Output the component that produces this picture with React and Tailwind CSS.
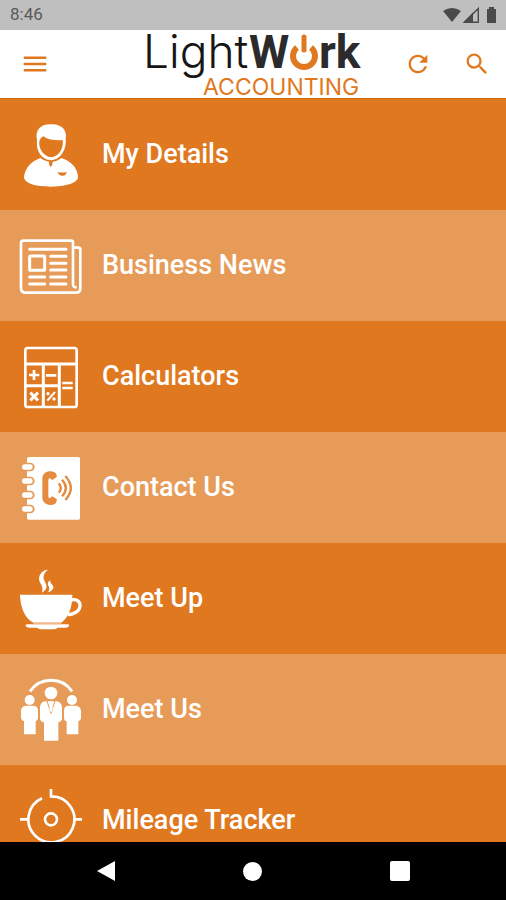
import React from 'react';
import { MdMenu, MdRefresh, MdSearch } from 'react-icons/md';

const ICON = 'size-16 shrink-0';

function PersonIcon() {
  return (
    <svg viewBox="57 50 192 192" className={ICON} aria-hidden="true">
      <path
        d="M111 101C105 72 120 54 151 54C184 51 203 71 197 98C200 126 184 160 153 162C123 160 107 132 111 101Z"
        fill="#fff"
      />
      <path
        d="M118 105C120 97 126 91 132 90C140 99 156 103 188 101C192 124 177 152 153 153C132 151 115 128 118 105Z"
        fill="#e07820"
      />
      <path
        d="M121 155C132 163 142 166 151 167L147 173L151 181L153 181L158 173L154 167C166 166 176 162 184 155C213 164 233 184 234 213C232 232 192 241 153 241C112 241 74 233 72 213C75 184 94 165 121 155Z"
        fill="#fff"
      />
      <path d="M146 166L149 173L151 181L154 173L160 166Z" fill="#e07820" />
      <path d="M173 197Q187 200 200 197Q199 208 187 208Q176 208 173 197Z" fill="#e07820" />
    </svg>
  );
}

function NewsIcon() {
  return (
    <svg
      viewBox="57 52 192 192"
      className={ICON}
      fill="none"
      stroke="#fff"
      strokeWidth="8"
      strokeLinecap="round"
      aria-hidden="true"
    >
      <path
        d="M219 204V78Q219 72 213 72H70Q63 72 63 79V214Q63 228 77 228H228Q241 228 241 214V99Q241 93 235 93H221M219 204Q220 212 227 212"
        strokeLinejoin="round"
      />
      <path
        d="M89 98H198M152 119H198M152 140H198M152 160H198M152 181H198M152 202H198M89 181H134M89 202H134"
        strokeWidth="9"
      />
      <rect x="89" y="118" width="45" height="43" rx="2" strokeWidth="9" />
    </svg>
  );
}

function CalculatorIcon() {
  return (
    <svg viewBox="57 55 192 192" className={ICON} fill="none" stroke="#fff" strokeWidth="8" aria-hidden="true">
      <rect x="76" y="64" width="154" height="177" rx="7" />
      <path d="M75 112H230M130 112V242M178 112V242M75 177H178" strokeWidth="9" />
      <path d="M87 145H118M102 130V160M138 146H169M187 169H218M187 184H218" />
      <path d="M91 198L114 221M114 198L91 221" strokeWidth="9" />
      <path d="M142 222L165 196" strokeWidth="6" />
      <circle cx="144" cy="201" r="5" fill="#fff" stroke="none" />
      <circle cx="162" cy="217" r="5" fill="#fff" stroke="none" />
    </svg>
  );
}

function PhoneBookIcon() {
  return (
    <svg viewBox="57 52 192 192" className={ICON} fill="none" aria-hidden="true">
      <rect x="81" y="55" width="159" height="188" rx="5" fill="#fff" />
      {[85, 127, 169, 211].map((y) => (
        <g key={y}>
          <rect x="62" y={y - 13} width="42" height="26" rx="13" fill="#e79b59" />
          <rect x="66" y={y - 8} width="32" height="16" rx="8" fill="#fff" />
        </g>
      ))}
      <path
        d="M149 98C134 99 127 109 127 121V176C127 189 136 198 151 199C162 199 170 193 170 186V181L156 173L149 179Q145 179 145 172V125Q145 118 150 119L157 124L170 115V110C169 102 160 98 149 98Z"
        fill="#e58a3f"
      />
      <path
        d="M176 134Q189 148 176 162M186 123Q209 148 186 173M196 112Q229 148 196 184"
        stroke="#e58a3f"
        strokeWidth="7"
      />
    </svg>
  );
}

function CoffeeIcon() {
  return (
    <svg viewBox="57 55 192 192" className={ICON} fill="#fff" aria-hidden="true">
      <path d="M144 63C129 64 117 75 117 91C118 106 132 110 126 132C135 127 141 119 139 110C137 100 129 94 131 82C132 74 138 68 144 63Z" />
      <path d="M151 95C143 99 142 107 146 113C149 119 148 125 144 131C154 128 161 121 160 114C158 107 149 104 151 95Z" />
      <path d="M60 138H217C217 177 205 207 184 222H100C76 210 61 179 60 138Z" />
      <path d="M211 155C229 149 241 158 240 172C239 187 222 198 204 198" fill="none" stroke="#fff" strokeWidth="10" />
      <path d="M81 227H204Q209 227 207 232Q205 237 197 237H172Q170 242 161 242H125Q115 242 112 237H87Q78 236 77 231Q77 227 81 227Z" />
      <path d="M100 224H184" stroke="#f0b98c" strokeWidth="5" />
    </svg>
  );
}

function MeetingIcon() {
  return (
    <svg viewBox="57 55 192 192" className={ICON} fill="#fff" aria-hidden="true">
      <path d="M90 95C121 50 187 51 216 95" fill="none" stroke="#fff" strokeWidth="9" />
      <circle cx="89" cy="121" r="15" />
      <circle cx="216" cy="121" r="15" />
      <circle cx="153" cy="100" r="19" />
      <path d="M77 138H101Q114 140 114 153V176Q113 184 107 185V224H72V185Q64 183 63 174V153Q64 140 77 138Z" />
      <path d="M204 138H228Q241 140 243 153V176Q242 184 235 185V224H200V185Q192 183 192 174V153Q192 140 204 138Z" />
      <path d="M137 125H169Q184 127 186 142V177Q184 187 175 188V243H132V188Q122 187 120 177V142Q121 127 137 125Z" />
      <path d="M141 124L153 161L165 124" fill="none" stroke="#e79b59" strokeWidth="3" />
      <path d="M149 125H157L156 132L158 151L153 158L148 151L151 132Z" fill="#fff" />
    </svg>
  );
}

function TrackerIcon() {
  return (
    <svg viewBox="57 55 192 192" className={ICON} fill="none" stroke="#fff" strokeWidth="8" aria-hidden="true">
      <path d="M126 83A69 69 0 1 0 153 77V54" />
      <circle cx="153" cy="146" r="18" />
      <path d="M60 146H84M222 146H246M153 215V239" />
    </svg>
  );
}

function Logo() {
  return (
    <svg
      viewBox="0 0 222 68"
      className="h-[68px] w-[222px] shrink-0 overflow-visible"
      role="img"
      aria-label="LightWork Accounting"
    >
      <text x="1" y="38" fontSize="46" fontWeight="300" fontFamily="Inter, sans-serif" fill="#161616">
        Light
      </text>
      <g fontSize="46" fontWeight="700" fontFamily="Roboto, sans-serif" fill="#2b2b2d">
        <text x="107" y="38">
          W
        </text>
        <text x="177" y="38">
          rk
        </text>
      </g>
      <text x="61" y="65" fontSize="23" fontWeight="400" fontFamily="Inter, sans-serif" fill="#e07820">
        ACCOUNTING
      </text>
      <g fill="none" stroke="#e07820">
        <path d="M155 17.500A11 11 0 1 0 169 17.500" strokeWidth="6" />
        <path d="M162 7V20" strokeWidth="5" strokeLinecap="round" />
      </g>
    </svg>
  );
}

const menuItems = [
  { label: 'My Details', Icon: PersonIcon },
  { label: 'Business News', Icon: NewsIcon },
  { label: 'Calculators', Icon: CalculatorIcon },
  { label: 'Contact Us', Icon: PhoneBookIcon },
  { label: 'Meet Up', Icon: CoffeeIcon },
  { label: 'Meet Us', Icon: MeetingIcon },
  { label: 'Mileage Tracker', Icon: TrackerIcon },
];

function StatusBar() {
  return (
    <div className="flex h-[30px] shrink-0 items-center justify-between bg-[#bfbfbf] pr-[9px] pl-2.5 text-[#5a5a5a]">
      <span className="text-[17px]">8:46</span>
      <svg viewBox="0 0 57 18" className="h-[18px] w-[57px]" fill="#4a4a4a" aria-hidden="true">
        <path d="M3 5Q12 -1 21 5L12 16Z" />
        <path d="M33 6.500V16.500H23Z" />
        <path d="M38.300 2.500V16.300H24.500Z" fill="none" stroke="#4a4a4a" strokeWidth="1.400" />
        <path d="M49 1H54V3H56V17H47V3H49Z" />
      </svg>
    </div>
  );
}

function Header() {
  return (
    <header className="flex h-[68px] shrink-0 items-center justify-between bg-white pr-[15px] pl-5 text-[#e07820]">
      <button type="button" aria-label="Menu">
        <MdMenu className="size-[30px]" />
      </button>
      <div className="flex items-center gap-10">
        <Logo />
        <div className="flex items-center gap-[31px]">
          <button type="button" aria-label="Refresh">
            <MdRefresh className="size-7" />
          </button>
          <button type="button" aria-label="Search">
            <MdSearch className="size-7" />
          </button>
        </div>
      </div>
    </header>
  );
}

function NavBar() {
  return (
    <nav className="flex h-[58px] shrink-0 items-center justify-around bg-black px-8">
      <button type="button" aria-label="Back">
        <svg viewBox="0 0 20 22" className="h-[22px] w-5" fill="#fff">
          <path d="M1 11L19 1V21Z" />
        </svg>
      </button>
      <button type="button" aria-label="Home" className="size-[19px] rounded-full bg-white" />
      <button type="button" aria-label="Recent apps" className="size-5 rounded-xs bg-white" />
    </nav>
  );
}

function App() {
  return (
    <div className="flex h-screen flex-col bg-black font-['Roboto',sans-serif]">
      <StatusBar />
      <Header />
      <main className="min-h-0 flex-1 overflow-y-auto border-t border-[#cf6610] bg-[#e07820] [scrollbar-width:none]">
        <ul>
          {menuItems.map(({ label, Icon }) => (
            <li key={label} className="odd:bg-[#e07820] even:bg-[#e79b59]">
              <a href="#" className="flex h-[111px] items-center gap-[19px] px-[19px] text-[27px] font-medium text-white">
                <Icon />
                <span>{label}</span>
              </a>
            </li>
          ))}
        </ul>
      </main>
      <NavBar />
    </div>
  );
}

export default App;
